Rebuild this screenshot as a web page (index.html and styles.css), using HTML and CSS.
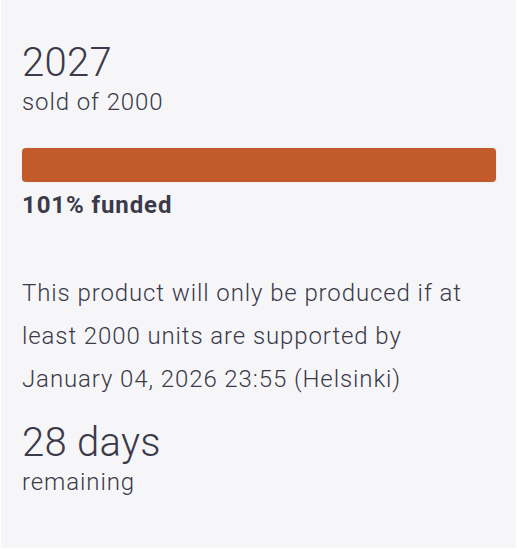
FILE: index.html
```html
<!DOCTYPE html>
<html>
<head>
<meta charset="utf-8">
<link rel="stylesheet" href="styles.css">
</head>
<body>
<div class="card">
  <div class="stat">
    <div class="big">2027</div>
    <div class="label">sold of 2000</div>
  </div>
  <div class="bar"><div class="fill" style="width:100%"></div></div>
  <div class="funded">101% funded</div>
  <p class="note">This product will only be produced if at least 2000 units are supported by January 04, 2026 23:55 (Helsinki)</p>
  <div class="stat stat-last">
    <div class="big">28 days</div>
    <div class="label">remaining</div>
  </div>
</div>
</body>
</html>
```
FILE: styles.css
```css
html, body {
  margin: 0;
  padding: 0;
  background: #ffffff;
}
body {
  font-family: Roboto, "Liberation Sans", sans-serif;
  color: #3a3a4a;
}
.card {
  margin: 0 1px;
  height: 548px;
  box-sizing: border-box;
  background: #f6f6f8;
  padding: 39px 20px 0 21px;
}
.big {
  font-size: 40px;
  font-weight: 300;
  line-height: 48px;
  letter-spacing: 0.3px;
}
.label {
  margin-top: 1px;
  font-size: 24px;
  font-weight: 300;
  line-height: 28px;
  letter-spacing: 0.9px;
}
.bar {
  margin-top: 32px;
  height: 34px;
  border-radius: 4px;
  background: #ffffff;
  box-shadow: 0 0 1px rgba(0,0,0,0.25);
  overflow: hidden;
}
.fill {
  height: 100%;
  background: #c25a2b;
}
.funded {
  margin-top: 8px;
  font-size: 24px;
  font-weight: 700;
  letter-spacing: 0.9px;
  line-height: 30px;
}
.note {
  margin: 52px 0 0;
  font-size: 24px;
  font-weight: 300;
  line-height: 43px;
  letter-spacing: 0.9px;
}
.stat-last {
  margin-top: 18px;
}
.stat-last .label {
  margin-top: 1px;
}
```
